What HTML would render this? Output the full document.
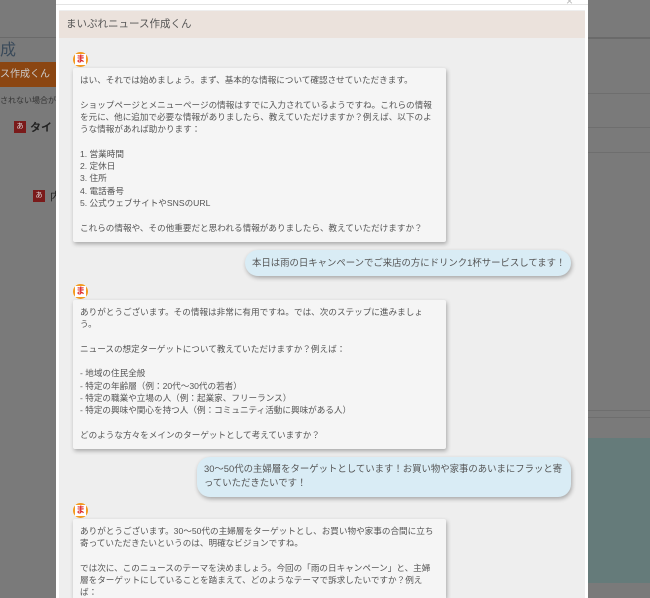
<!DOCTYPE html>
<html style="width:650px;height:598px;overflow:hidden"><head><meta charset="utf-8"><style>
*{margin:0;padding:0;box-sizing:border-box}
body{width:650px;height:598px;overflow:hidden;background:#7a7a7a;position:relative;font-family:"Liberation Sans","Noto Sans CJK JP",sans-serif}
.a{position:absolute}
.modal{left:56px;top:0;width:532px;height:598px;background:#fff}
.panel{left:59px;top:10px;width:526px;height:588px;background:#eeeeee}
.hdr{left:59px;top:11px;width:526px;height:27px;background:#ebe2dc;color:#555;font-size:10.5px;line-height:27px;padding-left:7px}
.bot{background:#f5f5f5;box-shadow:1px 2px 4px rgba(0,0,0,.3);border-radius:2px;color:#555;font-size:8.6px;line-height:12.3px;padding:6px 7px;white-space:pre;left:73px;width:373px;overflow:hidden}
.user{background:#d9ecf5;box-shadow:1px 2px 4px rgba(0,0,0,.3);border-radius:13px;color:#555;font-size:9.4px;line-height:14px;white-space:pre;padding:0 7px}
.av{left:73px;width:15px;height:15px;border-radius:50%;background:#f39a1e;}
.av span{position:absolute;left:2px;top:2px;width:11px;height:11px;background:#fff;color:#d22;font-size:9px;line-height:11px;text-align:center;font-weight:bold}
</style></head><body>
<div class="a" style="left:0;top:37px;width:56px;height:1px;background:#6a6a6a"></div>
<div class="a" style="left:588px;top:37px;width:62px;height:2px;background:#6a6a6a"></div>
<div class="a" style="left:588px;top:93px;width:62px;height:1px;background:#6e6e6e"></div>
<div class="a" style="left:588px;top:127px;width:62px;height:1px;background:#6e6e6e"></div>
<div class="a" style="left:588px;top:152px;width:62px;height:1px;background:#6e6e6e"></div>
<div class="a" style="left:588px;top:410px;width:62px;height:1px;background:#6e6e6e"></div>
<div class="a" style="left:588px;top:417px;width:62px;height:1px;background:#6e6e6e"></div>
<div class="a" style="left:588px;top:438px;width:62px;height:145px;background:#657b7a"></div>
<div class="a" style="left:0;top:36px;font-size:16px;color:#3a4a5a">成</div>
<div class="a" style="left:0;top:62px;width:56px;height:25px;background:#8b4612;color:#ccc;font-size:10px;line-height:25px">ス作成くん</div>
<div class="a" style="left:0;top:95px;font-size:8px;color:#333">されない場合があ</div>
<div class="a" style="left:14px;top:121px;width:12px;height:12px;background:#7a1a1a;color:#ddd;font-size:7px;text-align:center;line-height:12px">あ</div>
<div class="a" style="left:30px;top:119px;font-size:11px;color:#222;font-weight:bold">タイ</div>
<div class="a" style="left:33px;top:190px;width:12px;height:12px;background:#7a1a1a;color:#ddd;font-size:7px;text-align:center;line-height:12px">あ</div>
<div class="a" style="left:50px;top:188px;font-size:11px;color:#222">内</div>
<div class="a modal"></div>
<div class="a" style="left:566px;top:-6px;color:#bbb;font-size:12px">×</div>
<div class="a" style="left:56px;top:4px;width:532px;height:1px;background:#e4e4e4"></div>
<div class="a panel"></div>
<div class="a hdr">まいぷれニュース作成くん</div>

<div class="a av" style="top:52px"><span>ま</span></div>
<div class="a bot" style="top:68px;height:174px">はい、それでは始めましょう。まず、基本的な情報について確認させていただきます。

ショップページとメニューページの情報はすでに入力されているようですね。これらの情報
を元に、他に追加で必要な情報がありましたら、教えていただけますか？例えば、以下のよ
うな情報があれば助かります：

1. 営業時間
2. 定休日
3. 住所
4. 電話番号
5. 公式ウェブサイトやSNSのURL

これらの情報や、その他重要だと思われる情報がありましたら、教えていただけますか？</div>
<div class="a user" style="left:245px;top:250px;width:326px;height:26px;line-height:26px">本日は雨の日キャンペーンでご来店の方にドリンク1杯サービスしてます！</div>

<div class="a av" style="top:284px"><span>ま</span></div>
<div class="a bot" style="top:300px;height:149px">ありがとうございます。その情報は非常に有用ですね。では、次のステップに進みましょ
う。

ニュースの想定ターゲットについて教えていただけますか？例えば：

- 地域の住民全般
- 特定の年齢層（例：20代〜30代の若者）
- 特定の職業や立場の人（例：起業家、フリーランス）
- 特定の興味や関心を持つ人（例：コミュニティ活動に興味がある人）

どのような方々をメインのターゲットとして考えていますか？</div>
<div class="a user" style="left:197px;top:457px;width:374px;height:40px;padding-top:5px">30〜50代の主婦層をターゲットとしています！お買い物や家事のあいまにフラッと寄
っていただきたいです！</div>

<div class="a av" style="top:503px"><span>ま</span></div>
<div class="a bot" style="top:519px;height:79px;border-radius:2px 2px 0 0">ありがとうございます。30〜50代の主婦層をターゲットとし、お買い物や家事の合間に立ち
寄っていただきたいというのは、明確なビジョンですね。

では次に、このニュースのテーマを決めましょう。今回の「雨の日キャンペーン」と、主婦
層をターゲットにしていることを踏まえて、どのようなテーマで訴求したいですか？例え
ば：</div>
</body></html>
